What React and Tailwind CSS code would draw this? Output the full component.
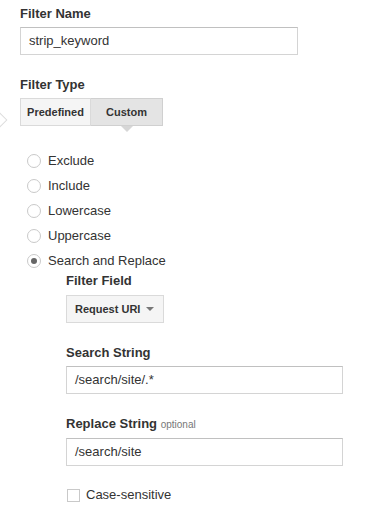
import React, { useState } from 'react';

const font = { fontFamily: '"Liberation Sans", Arial, sans-serif' };

function Radio({ label, checked, onSelect }) {
  return (
    <label className="flex items-center h-[25px] cursor-pointer" onClick={onSelect}>
      <span className="w-[14px] h-[14px] rounded-full border border-[#c9c9c9] bg-white flex items-center justify-center">
        {checked && <span className="w-[6px] h-[6px] rounded-full bg-[#666]" />}
      </span>
      <span className="ml-[7px] text-[13px] text-[#333]">{label}</span>
    </label>
  );
}

function TextBox({ value, width }) {
  return (
    <div
      className={`h-[28px] ${width} border border-[#d4d4d4] border-t-[#c0c0c0] bg-white flex items-center px-[8px] text-[13px] text-[#333]`}
    >
      {value}
    </div>
  );
}

export default function App() {
  const [type, setType] = useState('Search and Replace');
  const [tab, setTab] = useState('Custom');
  const options = ['Exclude', 'Include', 'Lowercase', 'Uppercase', 'Search and Replace'];

  return (
    <div className="relative w-[386px] h-[513px] bg-white overflow-hidden" style={font}>
      {/* left edge chevron */}
      <div className="absolute left-[-7px] top-[114px] w-[12px] h-[12px] rotate-45 border border-[#ddd] bg-white" />

      <div className="pl-[20px] pt-[6px]">
        <div className="text-[13px] font-bold text-[#333] leading-[16px]">Filter Name</div>
        <div className="mt-[5px]">
          <TextBox value="strip_keyword" width="w-[278px]" />
        </div>

        <div className="mt-[22px] text-[13px] font-bold text-[#333] leading-[16px]">Filter Type</div>
        <div className="mt-[5px] flex">
          <button
            onClick={() => setTab('Predefined')}
            className={`w-[71px] h-[28px] border border-[#dadada] text-[11px] font-bold text-[#333] ${tab === 'Predefined' ? 'bg-[#e4e4e4]' : 'bg-[#f5f5f5]'}`}
          >
            Predefined
          </button>
          <button
            onClick={() => setTab('Custom')}
            className={`relative w-[72px] h-[28px] border border-l-0 border-[#d0d0d0] text-[11px] font-bold text-[#333] ${tab === 'Custom' ? 'bg-[#e4e4e4]' : 'bg-[#f5f5f5]'}`}
          >
            Custom
            {tab === 'Custom' && (
              <span className="absolute left-1/2 -translate-x-1/2 top-[27px] w-0 h-0 border-l-[6px] border-r-[6px] border-t-[6px] border-l-transparent border-r-transparent border-t-[#d6d6d6]" />
            )}
          </button>
        </div>

        <div className="mt-[22px] pl-[7px]">
          {options.map((o) => (
            <Radio key={o} label={o} checked={type === o} onSelect={() => setType(o)} />
          ))}
        </div>

        <div className="pl-[46px]">
          <div className="text-[13px] font-bold text-[#333] leading-[16px]">Filter Field</div>
          <div className="mt-[6px] w-[98px] h-[28px] border border-[#dadada] bg-[#f5f5f5] flex items-center pl-[8px] pr-[9px] justify-between">
            <span className="text-[11px] font-bold text-[#333]">Request URI</span>
            <span className="w-0 h-0 border-l-[4px] border-r-[4px] border-t-[4px] border-l-transparent border-r-transparent border-t-[#777]" />
          </div>

          <div className="mt-[22px] text-[13px] font-bold text-[#333] leading-[16px]">Search String</div>
          <div className="mt-[5px]">
            <TextBox value="/search/site/.*" width="w-[277px]" />
          </div>

          <div className="mt-[22px] text-[13px] font-bold text-[#333] leading-[16px]">
            Replace String <span className="text-[10px] font-normal text-[#777]">optional</span>
          </div>
          <div className="mt-[5px]">
            <TextBox value="/search/site" width="w-[277px]" />
          </div>

          <label className="mt-[21px] flex items-center h-[16px]">
            <span className="ml-[1px] w-[13px] h-[13px] border border-[#c9c9c9] bg-white" />
            <span className="ml-[6px] text-[13px] text-[#333]">Case-sensitive</span>
          </label>
        </div>
      </div>
    </div>
  );
}
